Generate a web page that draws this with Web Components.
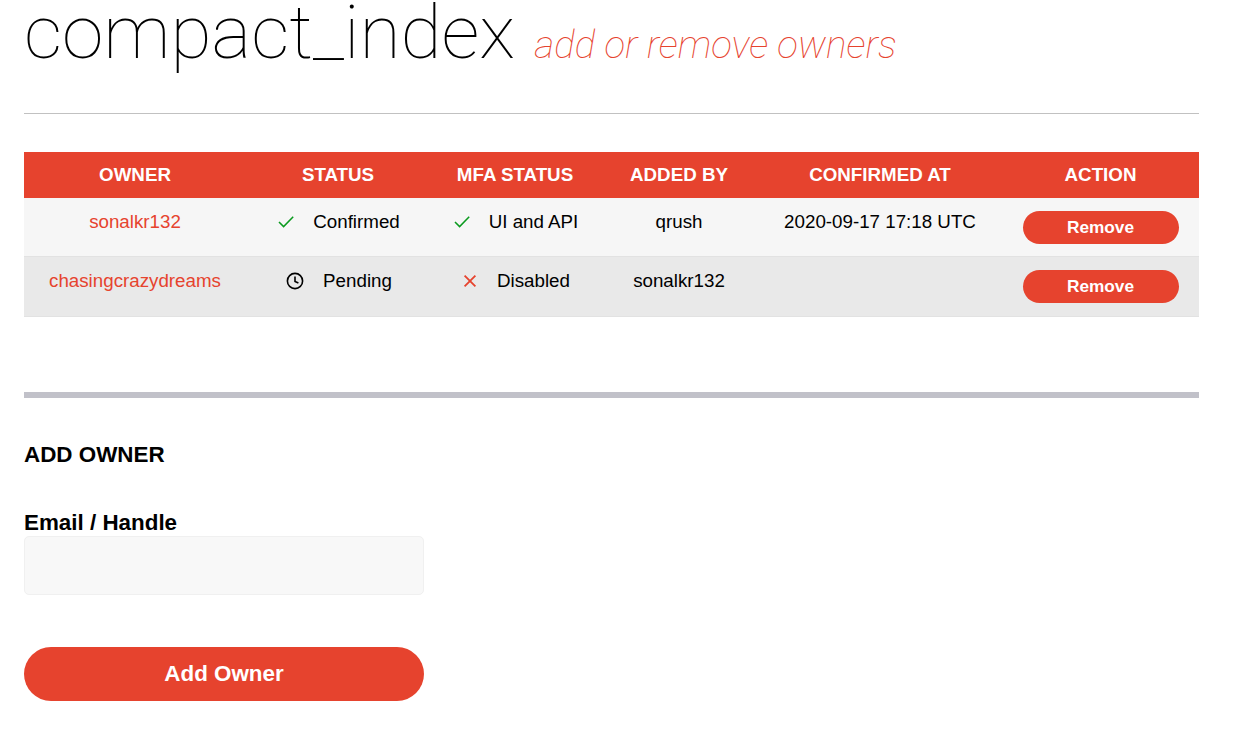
<!DOCTYPE html>
<html>
<head>
<meta charset="utf-8">
<title>compact_index owners</title>
<style>
  html, body { margin: 0; background: #fff; }
  body { font-family: "Liberation Sans", Arial, sans-serif; color: #000; }
</style>
</head>
<body>
<owners-page>
  <page-heading title="compact_index" sub="add or remove owners"></page-heading>
  <owners-table>
    <owner-row owner="sonalkr132" status="Confirmed" status-icon="check" mfa="UI and API" mfa-icon="check" added="qrush" confirmed="2020-09-17 17:18 UTC"></owner-row>
    <owner-row owner="chasingcrazydreams" status="Pending" status-icon="clock" mfa="Disabled" mfa-icon="cross" added="sonalkr132" confirmed=""></owner-row>
  </owners-table>
  <add-owner-form></add-owner-form>
</owners-page>

<script>
const ICONS = {
  check: '<svg width="16" height="16" viewBox="0 0 16 16" fill="none" stroke="#0a9a1e" stroke-width="1.5"><path d="M1 7.9 L5.6 12.6 L15.2 2.8"/></svg>',
  cross: '<svg width="16" height="16" viewBox="0 0 16 16" fill="none" stroke="#e6432e" stroke-width="1.8"><path d="M2.6 2.6 L13.4 13.4 M13.4 2.6 L2.6 13.4"/></svg>',
  clock: '<svg width="18" height="18" viewBox="0 0 18 18" fill="none" stroke="#000" stroke-width="1.6"><circle cx="9" cy="9" r="7.6"/><path d="M9 4.4 V9.5 L12.4 11"/></svg>'
};

class OwnersPage extends HTMLElement {
  connectedCallback() {
    this.attachShadow({ mode: 'open' });
    this.shadowRoot.innerHTML = `
      <style>
        :host { display: block; width: 1175px; padding: 0 36px 0 24px; }
      </style>
      <slot></slot>
    `;
  }
}

class PageHeading extends HTMLElement {
  connectedCallback() {
    this.attachShadow({ mode: 'open' });
    this.shadowRoot.innerHTML = `
      <style>
        :host {
          display: block;
          height: 113px;
          border-bottom: 1px solid #c1c1c1;
          font-family: Roboto, sans-serif;
          font-weight: 100;
        }
        .row { display: flex; align-items: baseline; gap: 19.5px; height: 65px; line-height: 65px; }
        h1 { margin: 0; font-size: 75px; font-weight: 100; color: #000; }
        em { font-size: 38.6px; font-style: italic; color: #e6432e; }
      </style>
      <div class="row">
        <h1>${this.getAttribute('title')}</h1>
        <em>${this.getAttribute('sub')}</em>
      </div>
    `;
  }
}

class OwnersTable extends HTMLElement {
  connectedCallback() {
    this.attachShadow({ mode: 'open' });
    const heads = ['Owner', 'Status', 'MFA Status', 'Added By', 'Confirmed At', 'Action'];
    this.shadowRoot.innerHTML = `
      <style>
        :host {
          display: block;
          margin-top: 38px;
          --cols: 222px 184px 170px 158px 244px 197px;
        }
        .head {
          display: grid;
          grid-template-columns: var(--cols);
          height: 46px;
          align-items: center;
          background: #e6432e;
          color: #fff;
          font-size: 18.75px;
          font-weight: 700;
          text-align: center;
          text-transform: uppercase;
        }
      </style>
      <div class="head">${heads.map(h => `<div>${h}</div>`).join('')}</div>
      <slot></slot>
    `;
  }
}

class OwnerRow extends HTMLElement {
  connectedCallback() {
    this.attachShadow({ mode: 'open' });
    const a = n => this.getAttribute(n);
    const state = (text, icon) => `<span class="state"><span class="ico">${ICONS[icon]}</span>${text}</span>`;
    this.shadowRoot.innerHTML = `
      <style>
        :host {
          display: grid;
          grid-template-columns: var(--cols);
          height: 58px;
          border-bottom: 1px solid #e2e2e2;
          background: #f6f6f6;
          font-size: 18.75px;
          text-align: center;
        }
        :host(:nth-child(even)) { height: 59px; background: #e9e9e9; }
        .cell { padding-top: 13px; line-height: 21px; }
        a { color: #e6432e; text-decoration: none; }
        .state { display: inline-flex; align-items: center; gap: 19px; padding-left: 2px; }
        .ico { display: inline-flex; }
        button {
          display: block;
          width: 156px;
          height: 33px;
          margin: 0 auto;
          border: 0;
          border-radius: 17px;
          background: #e6432e;
          color: #fff;
          font: 700 17.25px "Liberation Sans", Arial, sans-serif;
        }
      </style>
      <div class="cell"><a href="#">${a('owner')}</a></div>
      <div class="cell">${state(a('status'), a('status-icon'))}</div>
      <div class="cell">${state(a('mfa'), a('mfa-icon'))}</div>
      <div class="cell">${a('added')}</div>
      <div class="cell">${a('confirmed')}</div>
      <div class="cell"><button>Remove</button></div>
    `;
  }
}

class AddOwnerForm extends HTMLElement {
  connectedCallback() {
    this.attachShadow({ mode: 'open' });
    this.shadowRoot.innerHTML = `
      <style>
        :host {
          display: block;
          margin-top: 75px;
          border-top: 6px solid #c1c1c9;
          color: #000;
        }
        h3 { margin: 44px 0 0; font-size: 22.4px; line-height: 25px; font-weight: 700; }
        label { display: block; margin-top: 43px; font-size: 22.4px; line-height: 25px; font-weight: 700; }
        input {
          display: block;
          box-sizing: border-box;
          width: 400px;
          height: 59px;
          margin-top: 1px;
          border: 1px solid #f0f0f0;
          border-radius: 5px;
          background: #f8f8f8;
        }
        button {
          display: block;
          width: 400px;
          height: 54px;
          margin-top: 52px;
          border: 0;
          border-radius: 27px;
          background: #e6432e;
          color: #fff;
          font: 700 22.4px "Liberation Sans", Arial, sans-serif;
        }
      </style>
      <h3>ADD OWNER</h3>
      <label for="handle">Email / Handle</label>
      <input id="handle" type="text">
      <button>Add Owner</button>
    `;
  }
}

customElements.define('owners-page', OwnersPage);
customElements.define('page-heading', PageHeading);
customElements.define('owners-table', OwnersTable);
customElements.define('owner-row', OwnerRow);
customElements.define('add-owner-form', AddOwnerForm);
</script>
</body>
</html>
